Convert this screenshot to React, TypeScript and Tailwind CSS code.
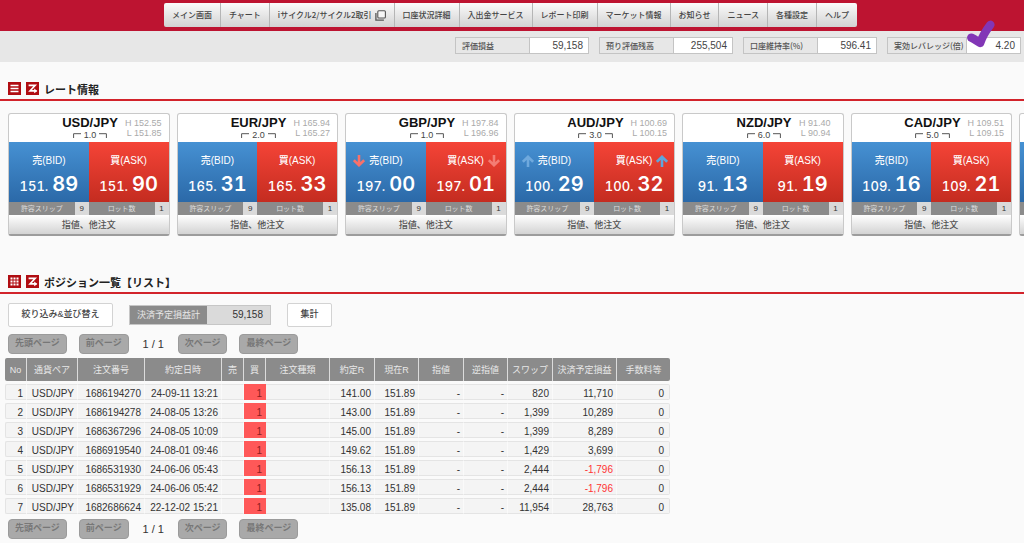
import type { ReactNode } from "react";

type Direction = "up" | "down" | null;

const navItems = [
  "メイン画面",
  "チャート",
  "iサイクル2/サイクル2取引",
  "口座状況詳細",
  "入出金サービス",
  "レポート印刷",
  "マーケット情報",
  "お知らせ",
  "ニュース",
  "各種設定",
  "ヘルプ",
];

const summary = [
  { label: "評価損益", value: "59,158" },
  { label: "預り評価残高", value: "255,504" },
  { label: "口座維持率(%)", value: "596.41" },
  { label: "実効レバレッジ(倍)", value: "4.20" },
];

interface Rate {
  pair: string;
  high: string;
  low: string;
  spread: string;
  bid: [string, string];
  ask: [string, string];
  move: Direction;
}

const rates: Rate[] = [
  { pair: "USD/JPY", high: "152.55", low: "151.85", spread: "1.0", bid: ["151.", "89"], ask: ["151.", "90"], move: null },
  { pair: "EUR/JPY", high: "165.94", low: "165.27", spread: "2.0", bid: ["165.", "31"], ask: ["165.", "33"], move: null },
  { pair: "GBP/JPY", high: "197.84", low: "196.96", spread: "1.0", bid: ["197.", "00"], ask: ["197.", "01"], move: "down" },
  { pair: "AUD/JPY", high: "100.69", low: "100.15", spread: "3.0", bid: ["100.", "29"], ask: ["100.", "32"], move: "up" },
  { pair: "NZD/JPY", high: "91.40", low: "90.94", spread: "6.0", bid: ["91.", "13"], ask: ["91.", "19"], move: null },
  { pair: "CAD/JPY", high: "109.51", low: "109.15", spread: "5.0", bid: ["109.", "16"], ask: ["109.", "21"], move: null },
];

const columns = [
  { name: "No", width: "w-[22px]" },
  { name: "通貨ペア", width: "w-[51px]" },
  { name: "注文番号", width: "w-[67px]" },
  { name: "約定日時", width: "w-[77px]" },
  { name: "売", width: "w-[22px]" },
  { name: "買", width: "w-[22px]" },
  { name: "注文種類", width: "w-[64px]" },
  { name: "約定R", width: "w-[45px]" },
  { name: "現在R", width: "w-[44px]" },
  { name: "指値", width: "w-[45px]" },
  { name: "逆指値", width: "w-[44px]" },
  { name: "スワップ", width: "w-[45px]" },
  { name: "決済予定損益", width: "w-[64px]" },
  { name: "手数料等", width: "w-[53px]" },
];

const BUY_COLUMN = 5;

const positions = [
  ["1", "USD/JPY", "1686194270", "24-09-11 13:21", "", "1", "", "141.00", "151.89", "-", "-", "820", "11,710", "0"],
  ["2", "USD/JPY", "1686194278", "24-08-05 13:26", "", "1", "", "143.00", "151.89", "-", "-", "1,399", "10,289", "0"],
  ["3", "USD/JPY", "1686367296", "24-08-05 10:09", "", "1", "", "145.00", "151.89", "-", "-", "1,399", "8,289", "0"],
  ["4", "USD/JPY", "1686919540", "24-08-01 09:46", "", "1", "", "149.62", "151.89", "-", "-", "1,429", "3,699", "0"],
  ["5", "USD/JPY", "1686531930", "24-06-06 05:43", "", "1", "", "156.13", "151.89", "-", "-", "2,444", "-1,796", "0"],
  ["6", "USD/JPY", "1686531929", "24-06-06 05:42", "", "1", "", "156.13", "151.89", "-", "-", "2,444", "-1,796", "0"],
  ["7", "USD/JPY", "1682686624", "22-12-02 15:21", "", "1", "", "135.08", "151.89", "-", "-", "11,954", "28,763", "0"],
];

function WindowIcon() {
  return (
    <svg width="11" height="11" viewBox="0 0 11 11" fill="none" stroke="#555" aria-hidden="true">
      <rect x="2.8" y="0.8" width="7.6" height="7.2" rx="1" strokeWidth="1.1" fill="#f6f6f6" />
      <path d="M0.9 3v7.2h8" strokeWidth="1.3" />
    </svg>
  );
}

function ListIcon() {
  return (
    <svg width="13" height="13" viewBox="0 0 13 13" aria-hidden="true">
      <rect width="13" height="13" fill="#b00d12" />
      <path d="M2.5 3.5h8M2.5 6.5h8M2.5 9.5h8" stroke="#fff" strokeWidth="1.4" />
    </svg>
  );
}

function GridIcon() {
  return (
    <svg width="13" height="13" viewBox="0 0 13 13" aria-hidden="true">
      <rect width="13" height="13" fill="#b00d12" />
      <g fill="#fff">
        {[2.5, 5.5, 8.5].map((y) =>
          [2.5, 5.5, 8.5].map((x) => <rect key={`${x}-${y}`} x={x} y={y} width="2" height="2" />),
        )}
      </g>
    </svg>
  );
}

function SwitchIcon() {
  return (
    <svg width="13" height="13" viewBox="0 0 13 13" fill="none" aria-hidden="true">
      <rect width="13" height="13" fill="#b00d12" />
      <path d="M2.6 3.4h6.6L4 8.9h6.4" stroke="#fff" strokeWidth="1.6" />
      <path d="M8.2 6.6l3.2 2.3-3.2 2.3z" fill="#fff" />
    </svg>
  );
}

function MoveArrow({ direction, className }: { direction: Direction; className: string }) {
  if (!direction) return <span className="w-3" />;
  return (
    <svg
      width="12"
      height="12"
      viewBox="0 0 12 12"
      fill="none"
      stroke="currentColor"
      strokeWidth="2.6"
      className={className}
      aria-hidden="true"
    >
      {direction === "down" ? (
        <path d="M6 0v10.2M0.9 5.2L6 10.2l5.1-5" />
      ) : (
        <path d="M6 12V1.8M0.9 6.8L6 1.8l5.1 5" />
      )}
    </svg>
  );
}

function SectionTitle({ icon, children }: { icon: ReactNode; children: ReactNode }) {
  return (
    <div className="flex items-start gap-[5px] border-b-2 border-[#d2232b] pl-[8px]">
      <button type="button" aria-label="表示">
        {icon}
      </button>
      <button type="button" aria-label="切替">
        <SwitchIcon />
      </button>
      <h2 className="text-[11px] leading-[17px] font-bold text-[#222]">{children}</h2>
    </div>
  );
}

function Price({ side, price, direction }: { side: "bid" | "ask"; price: [string, string]; direction: Direction }) {
  const isBid = side === "bid";
  const tone =
    direction === "down"
      ? isBid
        ? "text-[#f8716a]"
        : "text-[#f47d74]"
      : isBid
        ? "text-[#6fa9dd]"
        : "text-[#5fa5dc]";
  return (
    <button
      type="button"
      className={`flex h-[60px] flex-1 flex-col items-center pt-[12px] text-white ${
        isBid ? "bg-linear-to-b from-[#4691d3] to-[#2b69a8]" : "bg-linear-to-b from-[#f54437] to-[#c42c20]"
      }`}
    >
      <span className="flex items-center gap-[4px]">
        {isBid ? <MoveArrow direction={direction} className={tone} /> : <span className="w-3" />}
        <span className="text-[10px] leading-[14px] font-medium">{isBid ? "売(BID)" : "買(ASK)"}</span>
        {isBid ? <span className="w-3" /> : <MoveArrow direction={direction} className={tone} />}
      </span>
      <span className="flex items-baseline gap-[4px] font-[Inter,'Noto_Sans_CJK_JP',sans-serif] leading-[32px] tabular-nums">
        <span className="text-[13px] font-medium">{price[0]}</span>
        <span className="text-[20px] font-semibold">{price[1]}</span>
      </span>
    </button>
  );
}

function SettingField({ label, value }: { label: string; value: string }) {
  return (
    <label className="flex h-[13px] flex-1 items-stretch bg-[#8b8b8b] text-[#dedede]">
      <span className="flex-1 text-center text-[7px] leading-[13px]">{label}</span>
      <input
        readOnly
        defaultValue={value}
        className="w-[14px] bg-[#dadada] text-center text-[8px] leading-[13px] text-[#333]"
      />
    </label>
  );
}

function RateCard({ rate }: { rate: Rate }) {
  return (
    <article className="overflow-hidden rounded-[3px] border border-b-2 border-[#c9c9c9] border-b-[#9c9c9c] bg-white">
      <header className="flex h-[28px] items-start pl-[50px]">
        <div className="flex w-[62px] flex-col items-center">
          <h3 className="text-[13px] leading-[17px] font-bold whitespace-nowrap text-[#111]">{rate.pair}</h3>
          <div className="flex items-center gap-[3px] text-[9px] leading-[9px] text-[#444]">
            <svg width="8" height="5" viewBox="0 0 8 5" fill="none" stroke="#555" aria-hidden="true">
              <path d="M0.6 5V0.7H8" />
            </svg>
            {rate.spread}
            <svg width="8" height="5" viewBox="0 0 8 5" fill="none" stroke="#555" aria-hidden="true">
              <path d="M0 0.7h7.4V5" />
            </svg>
          </div>
        </div>
        <div className="pt-[4px] pl-[4px] text-right text-[9px] leading-[10px] whitespace-nowrap text-[#aaa]">
          <p>H {rate.high}</p>
          <p>L {rate.low}</p>
        </div>
      </header>
      <div className="flex">
        <Price side="bid" price={rate.bid} direction={rate.move} />
        <Price side="ask" price={rate.ask} direction={rate.move} />
      </div>
      <div className="flex">
        <SettingField label="許容スリップ" value="9" />
        <SettingField label="ロット数" value="1" />
      </div>
      <button
        type="button"
        className="block h-[19px] w-full bg-linear-to-b from-white to-[#d3d3d3] pt-[2px] text-[9px] leading-[17px] font-medium text-[#555]"
      >
        指値、他注文
      </button>
    </article>
  );
}

function PageButton({ children }: { children: ReactNode }) {
  return (
    <button
      type="button"
      className="h-[20px] rounded-[4px] border border-[#9b9b9b] bg-[#a9a9a9] px-[6px] text-[9px] font-bold text-[#777]"
    >
      {children}
    </button>
  );
}

function Pager() {
  return (
    <nav className="flex items-center gap-[12px] pl-[8px] text-[#333]">
      <PageButton>先頭ページ</PageButton>
      <PageButton>前ページ</PageButton>
      <span className="w-[25px] text-center text-[11px] whitespace-nowrap">1 / 1</span>
      <PageButton>次ページ</PageButton>
      <PageButton>最終ページ</PageButton>
    </nav>
  );
}

export default function App() {
  return (
    <div className="min-h-screen overflow-hidden bg-[#fafafa] pb-1 font-['Liberation_Sans','Noto_Sans_CJK_JP',sans-serif] text-[#333]">
      <header className="flex justify-center bg-[#bd1431] pt-[3px] pr-[3px] pb-[4px]">
        <nav className="flex h-[24px] overflow-hidden rounded-[2px] bg-linear-to-b from-[#fbfbfb] to-[#d2d2d2] font-['Noto_Sans_CJK_JP',sans-serif]">
          {navItems.map((item, index) => (
            <a
              key={item}
              href="#"
              className="flex items-center gap-[3px] border-r border-[#b5b5b5] px-2 text-[8px] font-medium whitespace-nowrap text-[#444] last:border-r-0"
            >
              {item}
              {index === 2 && <WindowIcon />}
            </a>
          ))}
        </nav>
      </header>

      <section className="relative flex justify-end gap-[10px] bg-[#e7e7e7] pt-[6px] pr-[3px] pb-[8px]">
        {summary.map((item) => (
          <dl key={item.label} className="flex h-[17px] w-[134px] border border-[#c4c4c4] leading-[15px]">
            <dt className="min-w-[74px] border-r border-[#c4c4c4] pr-[2px] pl-[6px] font-['Noto_Sans_CJK_JP',sans-serif] text-[8px] font-medium whitespace-nowrap text-[#555]">
              {item.label}
            </dt>
            <dd className="flex-1 bg-white pr-[5px] text-right text-[10px] text-[#444]">{item.value}</dd>
          </dl>
        ))}
        <svg
          className="absolute -top-[11px] right-[27px]"
          width="32"
          height="30"
          viewBox="0 0 32 30"
          fill="none"
          aria-hidden="true"
        >
          <path
            d="M6.3 17.6C9.5 19 12 21 15.2 23C17.4 16.5 21 10.5 25.4 4.8"
            stroke="#8236b6"
            strokeWidth="8.4"
            strokeLinecap="round"
            strokeLinejoin="round"
          />
        </svg>
      </section>

      <main>
        <section className="pt-[20px]">
          <SectionTitle icon={<ListIcon />}>レート情報</SectionTitle>
          <div className="ml-2 grid auto-cols-[calc((100%-47px)/6)] grid-flow-col gap-[7px] overflow-hidden pt-[12px]">
            {rates.map((rate) => (
              <RateCard key={rate.pair} rate={rate} />
            ))}
            <article className="overflow-hidden rounded-[3px] border border-b-2 border-[#c9c9c9] border-b-[#9c9c9c] bg-white pt-[28px]">
              <div className="h-[60px] bg-linear-to-b from-[#4691d3] to-[#2b69a8]" />
              <div className="h-[13px] bg-[#8b8b8b]" />
              <div className="h-[19px] bg-linear-to-b from-white to-[#d3d3d3]" />
            </article>
          </div>
        </section>

        <section className="pt-[39px]">
          <SectionTitle icon={<GridIcon />}>ポジション一覧【リスト】</SectionTitle>
          <div className="flex items-center gap-[16px] pt-[9px] pb-[7px] pl-[8px]">
            <button
              type="button"
              className="h-[24px] w-[105px] rounded-[2px] border border-[#d3d3d3] bg-white text-[9px] font-medium text-[#444]"
            >
              絞り込み&amp;並び替え
            </button>
            <dl className="flex h-[20px] w-[142px] border border-[#c6c6c6] leading-[18px]">
              <dt className="w-[77px] bg-[#8b8b8b] text-center text-[9px] text-[#e6e6e6]">決済予定損益計</dt>
              <dd className="flex-1 bg-[#dadada] pr-[7px] text-right text-[10px]">59,158</dd>
            </dl>
            <button
              type="button"
              className="h-[24px] w-[45px] rounded-[2px] border border-[#d3d3d3] bg-white text-[9px] font-medium text-[#444]"
            >
              集計
            </button>
          </div>

          <Pager />

          <table className="mt-px mb-[2px] ml-[5px] w-[665px] table-fixed border-separate border-spacing-x-0 border-spacing-y-[3px]">
            <thead>
              <tr>
                {columns.map((column) => (
                  <th
                    key={column.name}
                    scope="col"
                    className={`${column.width} h-[23px] border-r border-[#dcdcdc] bg-[#8b8b8b] p-0 text-center text-[9px] leading-[14px] font-normal whitespace-nowrap text-[#e8e8e8] first:rounded-l-[2px] last:rounded-r-[2px] last:border-r-0`}
                  >
                    {column.name}
                  </th>
                ))}
              </tr>
            </thead>
            <tbody>
              {positions.map((row) => (
                <tr key={row[2]}>
                  {row.map((cell, index) => {
                    const isBuy = index === BUY_COLUMN;
                    const isLoss = cell.length > 1 && cell.startsWith("-");
                    return (
                      <td
                        key={columns[index].name}
                        className={`h-[16px] border-y border-r p-0 pt-[3px] pr-[3px] text-right text-[10px] leading-[11px] whitespace-nowrap first:rounded-l-[2px] first:border-l first:border-l-[#e4e4e4] last:rounded-r-[2px] last:border-r-[#e4e4e4] last:pr-[5px] ${
                          isBuy
                            ? "border-[#ff5858] bg-[#ff5858] text-[#8d2020]"
                            : "border-y-[#e4e4e4] border-r-[#fafafa] bg-[#f4f4f4]"
                        } ${isLoss ? "text-[#f33]" : ""}`}
                      >
                        {cell}
                      </td>
                    );
                  })}
                </tr>
              ))}
            </tbody>
          </table>

          <Pager />
        </section>
      </main>
    </div>
  );
}
